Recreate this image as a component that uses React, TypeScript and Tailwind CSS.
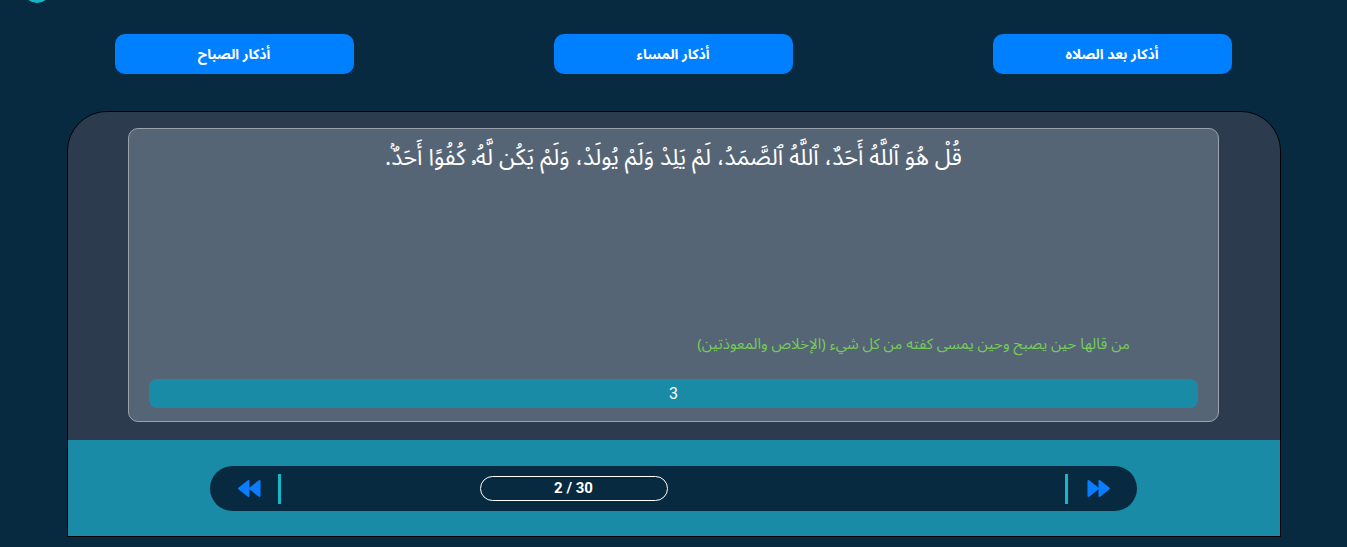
const categories = ['أذكار الصباح', 'أذكار المساء', 'أذكار بعد الصلاه']

function PrevIcon() {
  return (
    <svg width="25" height="19" viewBox="0 0 25 19" className="text-[#0a7cff]">
      <path d="M11.5 2 L2 9.5 L11.5 17 Z" fill="currentColor" stroke="currentColor" strokeWidth="2" strokeLinejoin="round" />
      <path d="M22.5 2 L13 9.5 L22.5 17 Z" fill="currentColor" stroke="currentColor" strokeWidth="2" strokeLinejoin="round" />
    </svg>
  )
}

function NextIcon() {
  return (
    <svg width="25" height="19" viewBox="0 0 25 19" className="text-[#0a7cff]">
      <path d="M2.5 2 L12 9.5 L2.5 17 Z" fill="currentColor" stroke="currentColor" strokeWidth="2" strokeLinejoin="round" />
      <path d="M13.5 2 L23 9.5 L13.5 17 Z" fill="currentColor" stroke="currentColor" strokeWidth="2" strokeLinejoin="round" />
    </svg>
  )
}

export default function App() {
  return (
    <div className="min-h-screen bg-[#082a41] font-['Noto_Sans_Arabic','Noto_Sans_Arabic_UI','Noto_Naskh_Arabic','Noto_Sans','DejaVu_Sans',Arial,sans-serif]">
      {/* header edge (scrolled away) */}
      <div className="h-[3px] overflow-hidden pl-[23px]">
        <div className="-mt-[25px] h-[28px] w-[28px] rounded-full bg-[#16b6c4]"></div>
      </div>

      {/* Category buttons */}
      <div className="mt-[31px] grid grid-cols-3 px-[15px]">
        {categories.map((c) => (
          <div key={c} className="flex justify-center">
            <button className="-ml-[1px] h-[40px] w-[239px] rounded-[10px] bg-[#0080ff] text-[14px] font-bold text-white">
              {c}
            </button>
          </div>
        ))}
      </div>

      {/* Card */}
      <div className="mx-auto mt-[37px] w-[1214px] overflow-hidden rounded-t-[40px] border border-black">
        <div className="h-[328px] bg-[#2d3b4e] pt-[16px]">
          <div dir="rtl" className="mx-auto flex h-[294px] w-[1091px] flex-col rounded-[10px] border border-[#9aa3ad] bg-[#566576] px-[20px] pb-[13px] pt-[13px]">
            <p className="text-center text-[23px] leading-[32px] text-white">
              قُلْ هُوَ ٱللَّهُ أَحَدٌ، ٱللَّهُ ٱلصَّمَدُ، لَمْ يَلِدْ وَلَمْ يُولَدْ، وَلَمْ يَكُن لَّهُۥ كُفُوًا أَحَدٌۢ.
            </p>
            <div className="flex-1"></div>
            <p className="pr-[68px] text-[15px] leading-[20px] text-[#74cc58]">
              من قالها حين يصبح وحين يمسى كفته من كل شيء (الإخلاص والمعوذتين)
            </p>
            <div className="mt-[25px] flex h-[29px] items-center justify-center rounded-[8px] bg-[#1a8ba6] font-['Roboto',sans-serif] text-[16px] text-white">
              3
            </div>
          </div>
        </div>

        <div className="h-[96px] bg-[#1a8ba6] pt-[26px]">
          <div className="ml-[142px] flex h-[45px] w-[927px] items-center rounded-full bg-[#082a41] pl-[27px] pr-[26px]">
            <PrevIcon />
            <div className="ml-[16px] h-[30px] w-[3px] bg-[#14b8c6]"></div>
            <div className="ml-[199px] flex h-[25px] w-[188px] items-center justify-center rounded-full border border-white font-['Roboto',sans-serif] text-[15px] font-bold text-white">
              2 / 30
            </div>
            <div className="flex-1"></div>
            <div className="mr-[18px] h-[30px] w-[3px] bg-[#14b8c6]"></div>
            <NextIcon />
          </div>
        </div>
      </div>
    </div>
  )
}
